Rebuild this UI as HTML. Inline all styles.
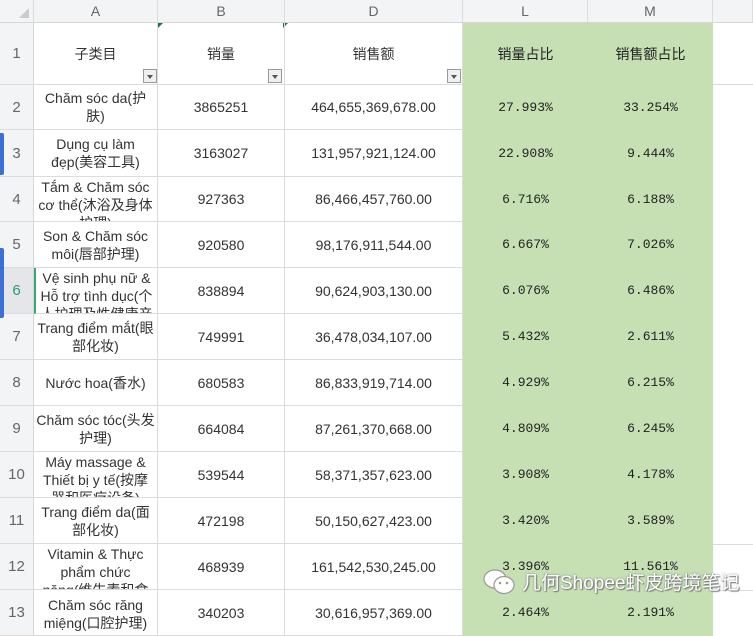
<!DOCTYPE html>
<html><head><meta charset="utf-8"><style>
*{margin:0;padding:0;box-sizing:border-box}
body{width:753px;height:618px;overflow:hidden;background:#fff;position:relative;font-family:"Liberation Sans","Noto Sans CJK SC",sans-serif;font-size:14px;color:#333}
.hdr{position:absolute;top:0;height:23px;background:#f3f4f6;border-right:1px solid #dcdcdc;border-bottom:1px solid #d6d6d6;color:#666;font-size:14px;display:flex;align-items:center;justify-content:center}
.rn{position:absolute;left:0;width:34px;background:#f3f4f6;border-right:1px solid #d6d6d6;border-bottom:1px solid #dcdcdc;color:#666;display:flex;align-items:center;justify-content:center;font-size:15px}
.c{position:absolute;border-right:1px solid #dcdcdc;border-bottom:1px solid #dcdcdc;display:flex;align-items:center;justify-content:center;text-align:center;overflow:hidden;line-height:18px;white-space:nowrap}
.g{background:#c6e0b4;border:none;font-family:"Liberation Mono","Noto Sans CJK SC",monospace;font-size:13px;color:#222}
.dd{position:absolute;width:14px;height:14px;border:1px solid #999;background:#f0f0f0}
.dd:after{content:"";position:absolute;left:3px;top:5px;border-left:3px solid transparent;border-right:3px solid transparent;border-top:4px solid #555}
</style></head><body>
<div class="hdr" style="left:0;width:34px"><div style="position:absolute;right:4px;bottom:4px;border-left:10px solid transparent;border-bottom:10px solid #ccc"></div></div>
<div class="hdr" style="left:34px;width:124px">A</div>
<div class="hdr" style="left:158px;width:127px">B</div>
<div class="hdr" style="left:285px;width:178px">D</div>
<div class="hdr" style="left:463px;width:125px">L</div>
<div class="hdr" style="left:588px;width:125px">M</div>
<div class="hdr" style="left:713px;width:40px"></div>
<div style="position:absolute;left:158px;top:23px;border-right:5px solid transparent;border-top:5px solid #217346"></div>
<div style="position:absolute;left:283px;top:23px;border-right:5px solid transparent;border-top:5px solid #217346"></div>

<div class="rn" style="top:23px;height:62px">1</div>
<div class="c" style="left:34px;top:23px;width:124px;height:62px;align-items:flex-start;padding-top:22px">子类目</div>
<div class="c" style="left:158px;top:23px;width:127px;height:62px;align-items:flex-start;padding-top:22px">销量</div>
<div class="c" style="left:285px;top:23px;width:178px;height:62px;align-items:flex-start;padding-top:22px">销售额</div>
<div class="dd" style="left:143px;top:69px"></div>
<div class="dd" style="left:268px;top:69px"></div>
<div class="dd" style="left:447px;top:69px"></div>
<div class="c g" style="left:463px;top:23px;width:125px;height:62px;align-items:flex-start;padding-top:22px;font-family:'Liberation Sans','Noto Sans CJK SC',sans-serif;font-size:14px">销量占比</div>
<div class="c g" style="left:588px;top:23px;width:125px;height:62px;align-items:flex-start;padding-top:22px;font-family:'Liberation Sans','Noto Sans CJK SC',sans-serif;font-size:14px">销售额占比</div>
<div style="position:absolute;left:713px;top:84px;width:40px;border-top:1px solid #dcdcdc"></div>

<div class="rn" style="top:85px;height:45px">2</div>
<div class="c" style="left:34px;top:85px;width:124px;height:45px">Chăm sóc da(护<br>肤)</div>
<div class="c" style="left:158px;top:85px;width:127px;height:45px">3865251</div>
<div class="c" style="left:285px;top:85px;width:178px;height:45px">464,655,369,678.00</div>
<div class="c g" style="left:463px;top:85px;width:125px;height:45px">27.993%</div>
<div class="c g" style="left:588px;top:85px;width:125px;height:45px">33.254%</div>

<div class="rn" style="top:130px;height:47px">3</div>
<div class="c" style="left:34px;top:130px;width:124px;height:47px">Dụng cụ làm<br>đẹp(美容工具)</div>
<div class="c" style="left:158px;top:130px;width:127px;height:47px">3163027</div>
<div class="c" style="left:285px;top:130px;width:178px;height:47px">131,957,921,124.00</div>
<div class="c g" style="left:463px;top:130px;width:125px;height:47px">22.908%</div>
<div class="c g" style="left:588px;top:130px;width:125px;height:47px">9.444%</div>

<div class="rn" style="top:177px;height:45px">4</div>
<div class="c" style="left:34px;top:177px;width:124px;height:45px;align-items:flex-start;padding-top:1px">Tắm &amp; Chăm sóc<br>cơ thể(沐浴及身体<br>护理)</div>
<div class="c" style="left:158px;top:177px;width:127px;height:45px">927363</div>
<div class="c" style="left:285px;top:177px;width:178px;height:45px">86,466,457,760.00</div>
<div class="c g" style="left:463px;top:177px;width:125px;height:45px">6.716%</div>
<div class="c g" style="left:588px;top:177px;width:125px;height:45px">6.188%</div>

<div class="rn" style="top:222px;height:46px">5</div>
<div class="c" style="left:34px;top:222px;width:124px;height:46px">Son &amp; Chăm sóc<br>môi(唇部护理)</div>
<div class="c" style="left:158px;top:222px;width:127px;height:46px">920580</div>
<div class="c" style="left:285px;top:222px;width:178px;height:46px">98,176,911,544.00</div>
<div class="c g" style="left:463px;top:222px;width:125px;height:46px">6.667%</div>
<div class="c g" style="left:588px;top:222px;width:125px;height:46px">7.026%</div>

<div class="rn" style="top:268px;height:46px;background:#e4e6ea;color:#2a9d6a">6</div>
<div class="c" style="left:34px;top:268px;width:124px;height:46px;align-items:flex-start;padding-top:1px;border-left:2px solid #3aa66f">Vệ sinh phụ nữ &amp;<br>Hỗ trợ tình dục(个<br>人护理及性健康产</div>
<div class="c" style="left:158px;top:268px;width:127px;height:46px">838894</div>
<div class="c" style="left:285px;top:268px;width:178px;height:46px">90,624,903,130.00</div>
<div class="c g" style="left:463px;top:268px;width:125px;height:46px">6.076%</div>
<div class="c g" style="left:588px;top:268px;width:125px;height:46px">6.486%</div>

<div class="rn" style="top:314px;height:46px">7</div>
<div class="c" style="left:34px;top:314px;width:124px;height:46px">Trang điểm mắt(眼<br>部化妆)</div>
<div class="c" style="left:158px;top:314px;width:127px;height:46px">749991</div>
<div class="c" style="left:285px;top:314px;width:178px;height:46px">36,478,034,107.00</div>
<div class="c g" style="left:463px;top:314px;width:125px;height:46px">5.432%</div>
<div class="c g" style="left:588px;top:314px;width:125px;height:46px">2.611%</div>

<div class="rn" style="top:360px;height:46px">8</div>
<div class="c" style="left:34px;top:360px;width:124px;height:46px">Nước hoa(香水)</div>
<div class="c" style="left:158px;top:360px;width:127px;height:46px">680583</div>
<div class="c" style="left:285px;top:360px;width:178px;height:46px">86,833,919,714.00</div>
<div class="c g" style="left:463px;top:360px;width:125px;height:46px">4.929%</div>
<div class="c g" style="left:588px;top:360px;width:125px;height:46px">6.215%</div>

<div class="rn" style="top:406px;height:46px">9</div>
<div class="c" style="left:34px;top:406px;width:124px;height:46px">Chăm sóc tóc(头发<br>护理)</div>
<div class="c" style="left:158px;top:406px;width:127px;height:46px">664084</div>
<div class="c" style="left:285px;top:406px;width:178px;height:46px">87,261,370,668.00</div>
<div class="c g" style="left:463px;top:406px;width:125px;height:46px">4.809%</div>
<div class="c g" style="left:588px;top:406px;width:125px;height:46px">6.245%</div>

<div class="rn" style="top:452px;height:46px">10</div>
<div class="c" style="left:34px;top:452px;width:124px;height:46px;align-items:flex-start;padding-top:1px">Máy massage &amp;<br>Thiết bị y tế(按摩<br>器和医疗设备)</div>
<div class="c" style="left:158px;top:452px;width:127px;height:46px">539544</div>
<div class="c" style="left:285px;top:452px;width:178px;height:46px">58,371,357,623.00</div>
<div class="c g" style="left:463px;top:452px;width:125px;height:46px">3.908%</div>
<div class="c g" style="left:588px;top:452px;width:125px;height:46px">4.178%</div>

<div class="rn" style="top:498px;height:46px">11</div>
<div class="c" style="left:34px;top:498px;width:124px;height:46px">Trang điểm da(面<br>部化妆)</div>
<div class="c" style="left:158px;top:498px;width:127px;height:46px">472198</div>
<div class="c" style="left:285px;top:498px;width:178px;height:46px">50,150,627,423.00</div>
<div class="c g" style="left:463px;top:498px;width:125px;height:46px">3.420%</div>
<div class="c g" style="left:588px;top:498px;width:125px;height:46px">3.589%</div>

<div class="rn" style="top:544px;height:46px">12</div>
<div class="c" style="left:34px;top:544px;width:124px;height:46px;align-items:flex-start;padding-top:1px">Vitamin &amp; Thực<br>phẩm chức<br>năng(维生素和食</div>
<div class="c" style="left:158px;top:544px;width:127px;height:46px">468939</div>
<div class="c" style="left:285px;top:544px;width:178px;height:46px">161,542,530,245.00</div>
<div class="c g" style="left:463px;top:544px;width:125px;height:46px">3.396%</div>
<div class="c g" style="left:588px;top:544px;width:125px;height:46px">11.561%</div>

<div class="rn" style="top:590px;height:46px">13</div>
<div class="c" style="left:34px;top:590px;width:124px;height:46px;align-items:flex-start;padding-top:6px">Chăm sóc răng<br>miệng(口腔护理)</div>
<div class="c" style="left:158px;top:590px;width:127px;height:46px">340203</div>
<div class="c" style="left:285px;top:590px;width:178px;height:46px">30,616,957,369.00</div>
<div class="c g" style="left:463px;top:590px;width:125px;height:46px">2.464%</div>
<div class="c g" style="left:588px;top:590px;width:125px;height:46px">2.191%</div>

<div style="position:absolute;left:713px;top:590px;width:40px;border-top:1px solid #dcdcdc"></div>
<div style="position:absolute;left:713px;top:544px;width:40px;border-top:1px solid #dcdcdc"></div>
<div style="position:absolute;left:0;top:133px;width:4px;height:42px;background:#3c6fd8;border-radius:0 2px 2px 0"></div>
<div style="position:absolute;left:0;top:248px;width:4px;height:70px;background:#3c6fd8;border-radius:0 2px 2px 0"></div>

<svg style="position:absolute;left:482px;top:568px" width="36" height="28" viewBox="0 0 36 28">
<ellipse cx="13" cy="11" rx="11" ry="9" fill="#fff" stroke="#999" stroke-width="1.2"/>
<ellipse cx="22" cy="17" rx="10" ry="8.5" fill="#fff" stroke="#999" stroke-width="1.2"/>
<circle cx="18" cy="15" r="1.3" fill="#999"/><circle cx="25" cy="15" r="1.3" fill="#999"/>
</svg>
<div style="position:absolute;left:522px;top:568px;font-size:19px;color:#fff;font-family:'Liberation Sans','Noto Sans CJK SC',sans-serif;text-shadow:0 0 2px #777,1px 1px 1px #777">几何Shopee虾皮跨境笔记</div>
</body></html>
